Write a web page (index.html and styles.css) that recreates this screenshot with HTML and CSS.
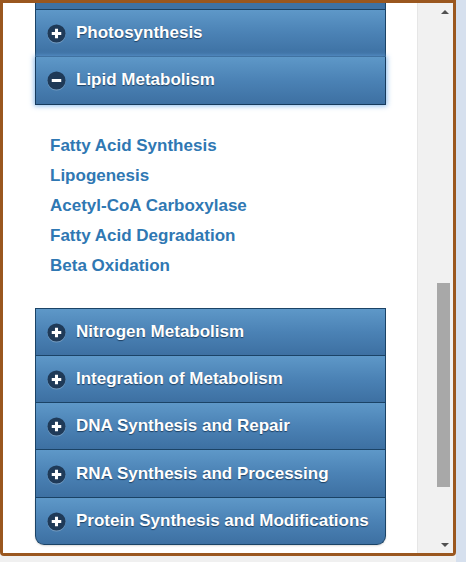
FILE: index.html
```html
<!DOCTYPE html>
<html>
<head>
<meta charset="utf-8">
<link rel="stylesheet" href="styles.css">
</head>
<body>
<div class="frame">
  <div class="viewport">
    <div class="accordion">
      <div class="header prev"></div>
      <div class="header"><span class="icon"><svg viewBox="0 0 20 20" width="19" height="19"><circle cx="10" cy="10" r="9.5" fill="#1f3a58"/><path d="M10 5v10M5 10h10" stroke="#fff" stroke-width="3.2"/></svg></span><span class="title">Photosynthesis</span></div>
      <div class="header active"><span class="icon"><svg viewBox="0 0 20 20" width="19" height="19"><circle cx="10" cy="10" r="9.5" fill="#1f3a58"/><path d="M5 10h10" stroke="#fff" stroke-width="3.2"/></svg></span><span class="title">Lipid Metabolism</span></div>
      <div class="panel">
        <a class="link">Fatty Acid Synthesis</a>
        <a class="link">Lipogenesis</a>
        <a class="link">Acetyl-CoA Carboxylase</a>
        <a class="link">Fatty Acid Degradation</a>
        <a class="link">Beta Oxidation</a>
      </div>
      <div class="header"><span class="icon"><svg viewBox="0 0 20 20" width="19" height="19"><circle cx="10" cy="10" r="9.5" fill="#1f3a58"/><path d="M10 5v10M5 10h10" stroke="#fff" stroke-width="3.2"/></svg></span><span class="title">Nitrogen Metabolism</span></div>
      <div class="header"><span class="icon"><svg viewBox="0 0 20 20" width="19" height="19"><circle cx="10" cy="10" r="9.5" fill="#1f3a58"/><path d="M10 5v10M5 10h10" stroke="#fff" stroke-width="3.2"/></svg></span><span class="title">Integration of Metabolism</span></div>
      <div class="header"><span class="icon"><svg viewBox="0 0 20 20" width="19" height="19"><circle cx="10" cy="10" r="9.5" fill="#1f3a58"/><path d="M10 5v10M5 10h10" stroke="#fff" stroke-width="3.2"/></svg></span><span class="title">DNA Synthesis and Repair</span></div>
      <div class="header"><span class="icon"><svg viewBox="0 0 20 20" width="19" height="19"><circle cx="10" cy="10" r="9.5" fill="#1f3a58"/><path d="M10 5v10M5 10h10" stroke="#fff" stroke-width="3.2"/></svg></span><span class="title">RNA Synthesis and Processing</span></div>
      <div class="header last"><span class="icon"><svg viewBox="0 0 20 20" width="19" height="19"><circle cx="10" cy="10" r="9.5" fill="#1f3a58"/><path d="M10 5v10M5 10h10" stroke="#fff" stroke-width="3.2"/></svg></span><span class="title">Protein Synthesis and Modifications</span></div>
    </div>
  </div>
  <div class="gutter">
    <div class="scrollbar">
      <div class="arrow up"></div>
      <div class="track"><div class="thumb"></div></div>
      <div class="arrow down"></div>
    </div>
  </div>
</div>
</body>
</html>
```
FILE: styles.css
```css
html, body {
  margin: 0;
  padding: 0;
}
body {
  width: 466px;
  height: 562px;
  background: linear-gradient(to right, #f0f0f0 0, #f0f0f0 456px, #d6e0ee 456px);
  overflow: hidden;
  font-family: "Liberation Sans", Arial, sans-serif;
}
.frame {
  box-sizing: border-box;
  width: 456px;
  height: 556px;
  border: 3px solid #9a571f;
  border-radius: 0 0 4px 4px;
  box-shadow: inset 0 0 0 1px #e9b070;
  display: flex;
  background: #fff;
}
.viewport {
  flex: 1;
  overflow: hidden;
  background: #fff;
  border-right: 1px solid #e6e6e6;
}
.accordion {
  margin-left: 32px;
  width: 351px;
}
.header {
  box-sizing: border-box;
  height: 47.3px;
  border: 1px solid #1b4366;
  border-top: none;
  background: linear-gradient(to bottom, #5e98c8 0%, #4b82b5 50%, #3d70a2 100%);
  display: flex;
  align-items: center;
  padding-left: 11px;
  color: #fff;
}
.header.prev {
  height: 7px;
  background: #3f72a4;
}
.header.active {
  box-shadow: 0 0 5px 1px rgba(110, 170, 230, 0.8);
  position: relative;
  border-color: #163a5c;
}
.header.last {
  border-radius: 0 0 9px 9px;
  box-shadow: 0 1px 2px rgba(0,0,0,0.15);
}
.panel + .header {
  border-top: 1px solid #1b4366;
  height: 48.3px;
}
.icon {
  width: 19px;
  height: 19px;
  display: flex;
  margin-top: 1px;
  filter: drop-shadow(0 1px 0 rgba(255,255,255,0.25));
}
.title {
  margin-left: 10px;
  font-size: 17px;
  font-weight: bold;
  text-shadow: 0 1px 1px #1d3f62;
  letter-spacing: 0;
}
.panel {
  padding: 26px 0 27px 15px;
  display: flex;
  flex-direction: column;
}
.link {
  font-size: 17px;
  font-weight: bold;
  line-height: 30px;
  color: #2f78b3;
}
.gutter {
  width: 35px;
  background: #f1f1f1;
  display: flex;
  justify-content: flex-end;
}
.scrollbar {
  width: 17px;
  display: flex;
  flex-direction: column;
}
.arrow {
  height: 17px;
  display: flex;
  align-items: center;
  justify-content: center;
}
.arrow.up::before {
  content: "";
  border-left: 4px solid transparent;
  border-right: 4px solid transparent;
  border-bottom: 4px solid #505050;
}
.arrow.down::before {
  content: "";
  border-left: 4px solid transparent;
  border-right: 4px solid transparent;
  border-top: 4px solid #505050;
}
.track {
  flex: 1;
  display: flex;
  flex-direction: column;
  padding-top: 263px;
}
.thumb {
  margin-left: 1px;
  width: 13px;
  height: 204px;
  background: #a8a8a8;
}
```
